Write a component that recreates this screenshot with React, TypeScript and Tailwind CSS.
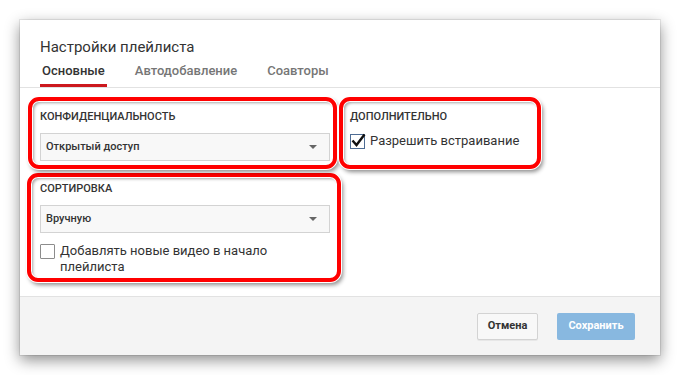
import React from "react";

const boxCls =
  "border-4 border-[#ff0000] rounded-[11px] bg-white shadow-[0_0_0_1px_#ffffff,2px_3px_4px_rgba(0,0,0,0.45),inset_0_0_0_1px_#ffffff,inset_2px_2px_3px_rgba(0,0,0,0.35)]";

function Select({ label }: { label: string }) {
  return (
    <div className="w-[290px] h-[28px] border border-[#d3d3d3] bg-[#f8f8f8] flex items-center justify-between pl-[5px] pr-[12px]">
      <span className="text-[11px] font-medium text-[#333]">{label}</span>
      <svg width="8" height="4" viewBox="0 0 8 4">
        <path d="M0 0 L8 0 L4 4 Z" fill="#666" />
      </svg>
    </div>
  );
}

export default function App() {
  return (
    <div
      className="w-[680px] h-[375px] bg-white pt-[20px] pl-[20px]"
      style={{ fontFamily: "Roboto, 'Liberation Sans', sans-serif" }}
    >
      <div className="w-[640px] h-[335px] bg-white flex flex-col shadow-[0_0_0_1px_rgba(0,0,0,0.08),0_5px_14px_rgba(0,0,0,0.45)]">
        {/* Header */}
        <div className="h-[68px] pl-[20px] pt-[16px] border-b border-[#e2e2e2] flex flex-col">
          <div className="h-[22px] leading-[22px] text-[15px] text-[#333]">Настройки плейлиста</div>
          <div className="flex gap-[26px] h-[29px]">
            <div className="px-[2px] h-[29px] border-b-[3px] border-[#cc181e] flex items-center text-[13px] font-medium text-[#333]">
              Основные
            </div>
            <div className="px-[2px] h-[29px] flex items-center pb-[3px] text-[13px] font-medium text-[#767676]">
              Автодобавление
            </div>
            <div className="px-[2px] h-[29px] flex items-center pb-[3px] text-[13px] font-medium text-[#767676]">
              Соавторы
            </div>
          </div>
        </div>

        {/* Body */}
        <div className="flex-1 pt-[9px] pl-[8px]">
          <div className="flex gap-[2px]">
            <div className={`${boxCls} w-[309px] h-[72px] pl-[8px] pt-[8px]`}>
              <div className="text-[11px] leading-[16px] font-medium text-[#333]">КОНФИДЕНЦИАЛЬНОСТЬ</div>
              <div className="mt-[8px]">
                <Select label="Открытый доступ" />
              </div>
            </div>
            <div className={`${boxCls} w-[202px] h-[72px] pl-[7px] pt-[8px]`}>
              <div className="text-[11px] leading-[16px] font-medium text-[#333]">ДОПОЛНИТЕЛЬНО</div>
              <div className="flex items-center mt-[8px] gap-[5px]">
                <div className="relative w-[15px] h-[15px] border border-[#4d6c94] bg-white">
                  <svg className="absolute left-[0px] top-[-2px]" width="15" height="15" viewBox="0 0 15 15">
                    <path d="M1.5 7.5 L5.5 12 L13.5 1.5" stroke="#111" strokeWidth="2.4" fill="none" strokeLinejoin="miter" />
                  </svg>
                </div>
                <span className="text-[13px] leading-[16px] text-[#333]">Разрешить встраивание</span>
              </div>
            </div>
          </div>
          <div className={`${boxCls} w-[314px] h-[109px] mt-[4px] ml-[-1px] pl-[9px] pt-[4px]`}>
            <div className="text-[11px] leading-[16px] font-medium text-[#333]">СОРТИРОВКА</div>
            <div className="mt-[8px]">
              <Select label="Вручную" />
            </div>
            <div className="flex items-start mt-[10px] gap-[5px]">
              <div className="w-[15px] h-[15px] mt-[1px] border border-[#8c8c8c] rounded-[1px] bg-white shrink-0" />
              <span className="text-[13px] leading-[16px] text-[#333] w-[230px]">
                Добавлять новые видео в начало плейлиста
              </span>
            </div>
          </div>
        </div>

        {/* Footer */}
        <div className="h-[59px] border-t border-[#e2e2e2] bg-[#f4f4f4] flex items-center justify-end pr-[25px] gap-[19px]">
          <button className="h-[27px] w-[61px] border border-[#d3d3d3] bg-[#f8f8f8] rounded-[2px] text-[11px] font-bold text-[#333] shadow-[0_1px_0_rgba(0,0,0,0.05)]">
            Отмена
          </button>
          <button className="h-[27px] w-[78px] bg-[#88b8e0] rounded-[2px] text-[11px] font-bold text-white">
            Сохранить
          </button>
        </div>
      </div>
    </div>
  );
}
